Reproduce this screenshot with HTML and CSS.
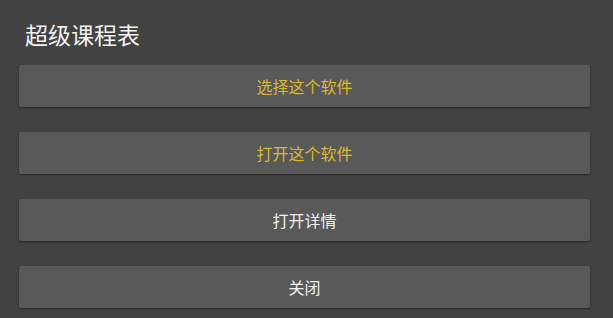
FILE: index.html
```html
<!DOCTYPE html>
<html lang="zh">
<head>
<meta charset="utf-8">
<link rel="stylesheet" href="styles.css">
</head>
<body>
<div class="dialog">
  <div class="title">超级课程表</div>
  <div class="actions">
    <button class="btn accent">选择这个软件</button>
    <button class="btn accent">打开这个软件</button>
    <button class="btn">打开详情</button>
    <button class="btn">关闭</button>
  </div>
</div>
</body>
</html>
```
FILE: styles.css
```css
html, body {
  margin: 0;
  padding: 0;
  background: #424242;
  height: 100%;
}
body {
  font-family: "Noto Sans CJK SC", "Noto Sans", sans-serif;
}
.dialog {
  padding: 0 23px 0 19px;
}
.title {
  height: 65px;
  box-sizing: border-box;
  padding: 19px 0 0 6px;
  font-size: 23px;
  line-height: 30px;
  color: #f2f2f2;
}
.actions {
  display: flex;
  flex-direction: column;
  gap: 25px;
}
.btn {
  display: block;
  width: 100%;
  height: 42px;
  border: none;
  border-radius: 2px;
  background: #595959;
  box-shadow: 0 1px 2px rgba(0,0,0,0.45);
  color: #f0f0f0;
  font-family: inherit;
  font-size: 16px;
  padding: 0;
}
.btn.accent {
  color: #d9bb2c;
}
```
